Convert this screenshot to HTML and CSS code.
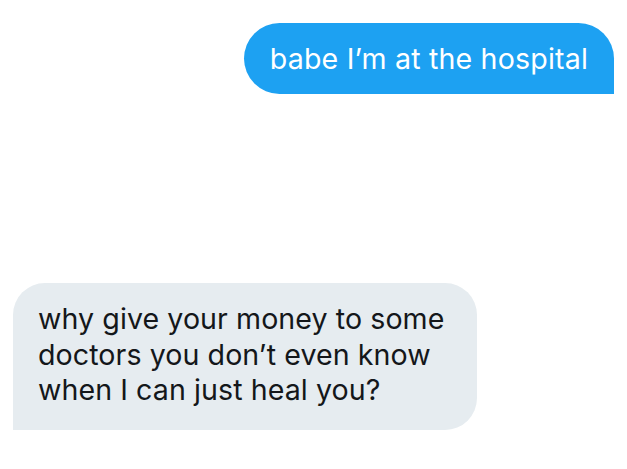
FILE: index.html
```html
<!DOCTYPE html>
<html>
<head>
<meta charset="utf-8">
<link rel="stylesheet" href="styles.css">
</head>
<body>
<div class="thread">
  <div class="row row-sent">
    <div class="bubble sent">babe I’m at the hospital</div>
  </div>
  <div class="row row-recv">
    <div class="bubble recv">why give your money to some<br>doctors you don’t even know<br>when I can just heal you?</div>
  </div>
</div>
</body>
</html>
```
FILE: styles.css
```css
html, body {
  margin: 0;
  padding: 0;
  background: #ffffff;
}
.thread {
  display: flex;
  flex-direction: column;
  gap: 189px;
  padding: 23px 13px 0 13px;
  font-family: Inter, "Liberation Sans", sans-serif;
  font-size: 28.6px;
}
.row {
  display: flex;
}
.row-sent {
  justify-content: flex-end;
}
.row-recv {
  justify-content: flex-start;
}
.bubble {
  box-sizing: border-box;
}
.sent {
  background: #1da1f2;
  color: #ffffff;
  height: 71px;
  padding: 17px 26px;
  line-height: 37px;
  letter-spacing: 0.17px;
  border-radius: 36px 36px 0 36px;
}
.recv {
  background: #e6ecf0;
  color: #14171a;
  width: 464px;
  height: 147px;
  padding: 18px 25px;
  line-height: 35.5px;
  letter-spacing: 0.07px;
  border-radius: 32px 32px 32px 0;
}
```
